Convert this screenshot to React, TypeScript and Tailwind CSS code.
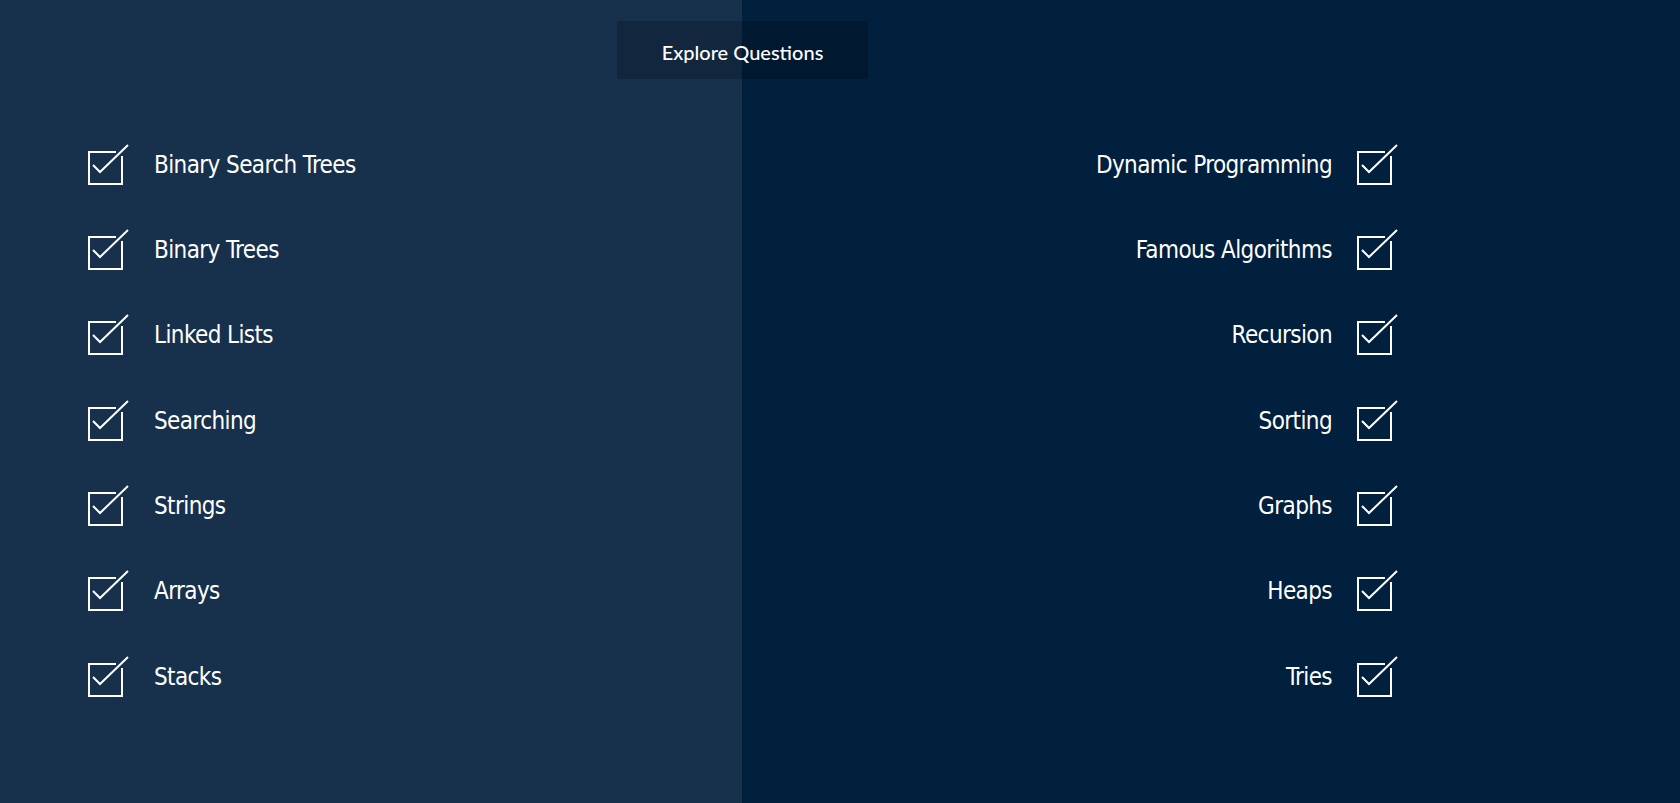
import clsx from "clsx";

// ── Data ────────────────────────────────────────────────────────────────

const LEFT = ["Binary Search Trees", "Binary Trees", "Linked Lists", "Searching", "Strings", "Arrays", "Stacks"];
const RIGHT = ["Dynamic Programming", "Famous Algorithms", "Recursion", "Sorting", "Graphs", "Heaps", "Tries"];

// ── Check icon ──────────────────────────────────────────────────────────

function CheckBox() {
  return (
    <svg className="h-[42px] w-[42px] shrink-0" viewBox="0 0 42 42" fill="none" stroke="white" strokeWidth="2" aria-hidden="true">
      <path d="M28 8H2V40H35V13" strokeLinecap="square" />
      <path d="M6 21L13 28L41 1" />
    </svg>
  );
}

function Row({ label, side }: { label: string; side: "left" | "right" }) {
  return (
    <div
      className={clsx(
        "flex h-[85.33px] items-center",
        side === "right" && "justify-end",
      )}
    >
      {side === "left" && <CheckBox />}
      <span
        className={clsx(
          "text-[24px] leading-none tracking-[-0.6px] text-white",
          side === "left" ? "ml-[25px]" : "mr-[24px]",
        )}
        style={{ fontFamily: '"Liberation Sans Narrow", "DejaVu Sans Condensed", sans-serif' }}
      >
        {label}
      </span>
      {side === "right" && <CheckBox />}
    </div>
  );
}

// ── Page ────────────────────────────────────────────────────────────────

export default function App() {
  return (
    <div className="relative flex h-[803px] w-full overflow-hidden">
      <div className="w-[742px] shrink-0 bg-[#17314d] pl-[87px] pt-[122px]">
        {LEFT.map((t) => (
          <Row key={t} label={t} side="left" />
        ))}
      </div>
      <div className="flex-1 bg-[#00203e] pr-[282px] pt-[122px]">
        {RIGHT.map((t) => (
          <Row key={t} label={t} side="right" />
        ))}
      </div>

      <button
        className="absolute left-[617px] top-[21px] flex h-[58px] w-[251px] items-center justify-center bg-black/20 pt-[3px] text-[20px] font-medium text-white"
        style={{ fontFamily: "Lato, sans-serif" }}
      >
        Explore Questions
      </button>
    </div>
  );
}
